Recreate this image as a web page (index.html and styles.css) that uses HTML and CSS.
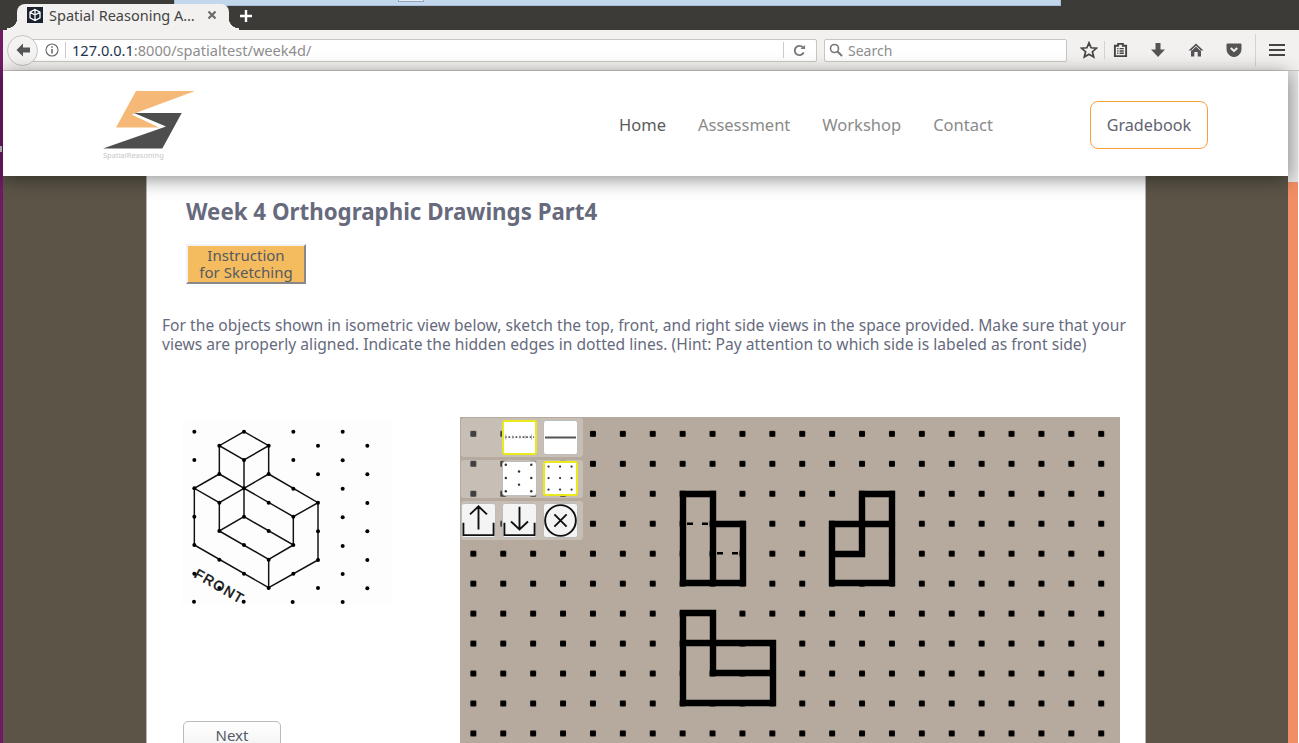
FILE: index.html
```html
<!DOCTYPE html>
<html lang="en">
<head>
<meta charset="utf-8">
<title>Spatial Reasoning Assessment</title>
<link rel="stylesheet" href="styles.css">
</head>
<body>
<div class="bluewin"><span class="bluebox"></span></div>
<div class="tabbar">
  <div class="tab">
    <svg class="favicon" viewBox="0 0 16 16"><rect width="16" height="16" fill="#1b2230"/><path d="M8 2.500 13 5.200V10.800L8 13.500 3 10.800V5.200ZM8 2.500V7M3 5.200 8 8 13 5.200M8 8V13.500" fill="none" stroke="#fff" stroke-width="1.300"/></svg>
    <span class="tabtitle">Spatial Reasoning A…</span>
    <svg class="tabclose" viewBox="0 0 10 10"><path d="M1.500 1.500 8.500 8.500M8.500 1.500 1.500 8.500" stroke="#6a6a66" stroke-width="2.200"/></svg>
  </div>
  <svg class="newtab" viewBox="0 0 14 14"><path d="M7 1V13M1 7H13" stroke="#fff" stroke-width="2.400"/></svg>
</div>
<div class="below">
  <div class="strip"></div>
  <div class="window">
    <div class="toolbar">
      <div class="backbtn"><svg viewBox="0 0 16 16" width="16" height="16"><path d="M8 1.500 1.500 8 8 14.500V10.500H15V5.500H8Z" fill="#555"/></svg></div>
      <div class="urlbar">
        <svg class="info" viewBox="0 0 14 14"><circle cx="7" cy="7" r="6" fill="none" stroke="#666" stroke-width="1.100"/><path d="M7 6V10.500M7 3.300V4.800" stroke="#666" stroke-width="1.500"/></svg>
        <span class="urlsep"></span>
        <span class="url"><b>127.0.0.1</b>:8000/spatialtest/week4d/</span>
        <span class="urlsep2"></span>
        <svg class="reload" viewBox="0 0 14 14"><path d="M11.500 9A5 5 0 1 1 10.500 3.500" fill="none" stroke="#777" stroke-width="2"/><path d="M8 5.500H13V1Z" fill="#777"/></svg>
      </div>
      <div class="searchbar">
        <svg class="mag" viewBox="0 0 14 14"><circle cx="5.500" cy="5.500" r="4" fill="none" stroke="#777" stroke-width="1.600"/><path d="M8.500 8.500 13 13" stroke="#777" stroke-width="2"/></svg>
        <span>Search</span>
      </div>
      <div class="tbicons">
        <svg class="tbi star" viewBox="0 0 18 18"><path d="M9 1.800 11.100 6.800 16.500 7.200 12.400 10.700 13.700 16 9 13.200 4.300 16 5.600 10.700 1.500 7.200 6.900 6.800Z" fill="none" stroke="#444" stroke-width="1.700"/></svg>
        <span class="tbsep"></span>
        <svg class="tbi clip" viewBox="0 0 16 16"><path d="M2 3.500H5.500V1.500H10.500V3.500H14V14.500H2Z" fill="none" stroke="#444" stroke-width="2"/><path d="M4.500 6.500H5.800M7 6.500H11.500M4.500 9H5.800M7 9H11.500M4.500 11.500H5.800M7 11.500H11.500" stroke="#444" stroke-width="1.500"/></svg>
        <svg class="tbi down" viewBox="0 0 16 16"><path d="M5.500 1H10.500V7.500H15L8 15 1 7.500H5.500Z" fill="#555"/></svg>
        <svg class="tbi home" viewBox="0 0 16 16"><path d="M8 1.500 15.500 8.500H13V14.500H9.700V10H6.300V14.500H3V8.500H.5Z" fill="#555"/><path d="M8 4.200 3.500 8.500" stroke="#f2f1ef" stroke-width=".9"/><path d="M8 4.200 12.500 8.500" stroke="#f2f1ef" stroke-width=".9"/></svg>
        <svg class="tbi pocket" viewBox="0 0 16 16"><path d="M1 2H15V7.500A7 7 0 0 1 1 7.500Z" fill="#555" stroke="#555" stroke-linejoin="round"/><path d="M4.800 6 8 9 11.200 6" fill="none" stroke="#f2f1ef" stroke-width="2"/></svg>
        <span class="tbsep tbsep2"></span>
        <svg class="tbi burger" viewBox="0 0 16 14"><path d="M0 2H16M0 7H16M0 12H16" stroke="#444" stroke-width="2.100"/></svg>
      </div>
    </div>
    <div class="viewport">
      <div class="page">
        <header class="siteheader">
          <div class="logo">
            <svg class="logomark" viewBox="0 0 92 60"><polygon points="33,0 92,0 28.700,23.500 56,36.500 13,36.500" fill="#f5b877"/><polygon points="31,22 78.700,22 59.300,57.500 0,57.500 63,35.500" fill="#4e4e4e"/></svg>
            <span class="logotext">SpatialReasoning</span>
          </div>
          <nav class="nav">
            <a class="navlink active">Home</a>
            <a class="navlink">Assessment</a>
            <a class="navlink">Workshop</a>
            <a class="navlink">Contact</a>
          </nav>
          <a class="gradebook">Gradebook</a>
        </header>
        <main class="main">
          <section class="content">
            <h1 class="title">Week 4 Orthographic Drawings Part4</h1>
            <a class="instr">Instruction<br>for Sketching</a>
            <p class="desc">For the objects shown in isometric view below, sketch the top, front, and right side views in the space provided. Make sure that your views are properly aligned. Indicate the hidden edges in dotted lines. (Hint: Pay attention to which side is labeled as front side)</p>
            <div class="work">
              <div class="leftcol">
                <svg class="iso" viewBox="36 30 630 555">
                  <rect x="36" y="30" width="630" height="555" fill="#fdfdfd"/>
                  <g fill="none" stroke="#111" stroke-width="4.400">
                    <path d="M222 65 296 107 222 150 148 107Z"/>
                    <path d="M148 107V192M296 107V192M222 150V320"/>
                    <path d="M148 192 73 235 148 278 296 192"/>
                    <path d="M148 192 370 320 444 278 296 192"/>
                    <path d="M73 235V405L296 533 444 450V278"/>
                    <path d="M148 278V363L222 320 370 405V320"/>
                    <path d="M148 363 296 448 370 405M296 448V533"/>
                  </g>
                  <g fill="#000">
                    <circle cx="73" cy="65" r="6"/><circle cx="222" cy="65" r="6"/><circle cx="370" cy="65" r="6"/><circle cx="518" cy="65" r="6"/>
                    <circle cx="148" cy="107" r="6"/><circle cx="296" cy="107" r="6"/><circle cx="444" cy="107" r="6"/><circle cx="592" cy="107" r="6"/>
                    <circle cx="73" cy="150" r="6"/><circle cx="222" cy="150" r="6"/><circle cx="370" cy="150" r="6"/><circle cx="518" cy="151" r="6"/>
                    <circle cx="148" cy="192" r="6"/><circle cx="296" cy="192" r="6"/><circle cx="444" cy="193" r="6"/><circle cx="592" cy="193" r="6"/>
                    <circle cx="73" cy="235" r="6"/><circle cx="222" cy="235" r="6"/><circle cx="370" cy="236" r="6"/><circle cx="518" cy="236" r="6"/>
                    <circle cx="148" cy="278" r="6"/><circle cx="296" cy="278" r="6"/><circle cx="444" cy="278" r="6"/><circle cx="592" cy="279" r="6"/>
                    <circle cx="73" cy="320" r="6"/><circle cx="222" cy="320" r="6"/><circle cx="370" cy="320" r="6"/><circle cx="518" cy="322" r="6"/>
                    <circle cx="148" cy="363" r="6"/><circle cx="296" cy="363" r="6"/><circle cx="444" cy="364" r="6"/><circle cx="592" cy="364" r="6"/>
                    <circle cx="73" cy="405" r="6"/><circle cx="222" cy="405" r="6"/><circle cx="370" cy="405" r="6"/><circle cx="518" cy="408" r="6"/>
                    <circle cx="148" cy="449" r="6"/><circle cx="296" cy="449" r="6"/><circle cx="444" cy="450" r="6"/><circle cx="592" cy="450" r="6"/>
                    <circle cx="73" cy="491" r="6"/><circle cx="222" cy="491" r="6"/><circle cx="370" cy="491" r="6"/><circle cx="518" cy="492" r="6"/>
                    <circle cx="148" cy="534" r="6"/><circle cx="296" cy="534" r="6"/><circle cx="444" cy="534" r="6"/><circle cx="592" cy="535" r="6"/>
                    <circle cx="72" cy="575" r="6"/><circle cx="221" cy="575" r="6"/><circle cx="368" cy="576" r="6"/><circle cx="518" cy="576" r="6"/>
                  </g>
                  <text class="front" transform="translate(70 500) rotate(30)">FRONT</text>
                </svg>
                <a class="next">Next</a>
              </div>
              <div class="sketch">
                <svg class="sheet" viewBox="0 0 660 400">
                  <defs><pattern id="dots" x="10.350" y="13.850" width="29.900" height="29.960" patternUnits="userSpaceOnUse"><rect width="6" height="6" rx="1" fill="#000"/></pattern></defs>
                  <rect width="660" height="400" fill="#b5aa9d"/>
                  <rect width="660" height="400" fill="url(#dots)"/>
                  <g fill="none" stroke="#000" stroke-width="6.400" stroke-linecap="square">
                    <path d="M223 77H253V166H223ZM253 107H283V166H253Z"/>
                    <path d="M402 77H432V166H372V107H432M402 77V137H372"/>
                    <path d="M223 196H253V256H313M223 196V286H313V226H223"/>
                  </g>
                  <path d="M227 106.700H233M242 106.700H248M257 136.300H263M272 136.300H278" stroke="#000" stroke-width="2.600"/>
                </svg>
                <div class="tools">
                  <div class="toolrow">
                    <a class="tool on"><svg viewBox="0 0 35 35"><path d="M1 17H34" stroke="#555" stroke-width="2" stroke-dasharray="2 2"/><path d="M2 14V20M31 14V20M10 15V19M18 15V19M24 15V19" stroke="#aaa" stroke-width="1"/></svg></a>
                    <a class="tool"><svg viewBox="0 0 35 35"><path d="M1 17.500H34" stroke="#555" stroke-width="2"/></svg></a>
                  </div>
                  <div class="toolrow">
                    <a class="tool"><svg viewBox="0 0 35 35"><g fill="#333"><circle cx="3" cy="3" r="1.300"/><circle cx="30" cy="3" r="1.300"/><circle cx="17" cy="10" r="1.300"/><circle cx="3" cy="17" r="1.300"/><circle cx="30" cy="17" r="1.300"/><circle cx="17" cy="24" r="1.300"/><circle cx="3" cy="31" r="1.300"/><circle cx="30" cy="31" r="1.300"/></g></svg></a>
                    <a class="tool on"><svg viewBox="0 0 35 35"><g fill="#333"><circle cx="4" cy="4" r="1.300"/><circle cx="17" cy="4" r="1.300"/><circle cx="30" cy="4" r="1.300"/><circle cx="4" cy="17" r="1.300"/><circle cx="17" cy="17" r="1.300"/><circle cx="30" cy="17" r="1.300"/><circle cx="4" cy="30" r="1.300"/><circle cx="17" cy="30" r="1.300"/><circle cx="30" cy="30" r="1.300"/></g></svg></a>
                  </div>
                  <div class="toolrow">
                    <a class="tool grey"><svg viewBox="0 0 35 35"><path d="M17.500 27V2.500M8.500 11 17.500 2.500 26.500 11" fill="none" stroke="#111" stroke-width="2"/><path d="M1.500 20V33H33.500V20" fill="none" stroke="#111" stroke-width="2"/></svg></a>
                    <a class="tool grey"><svg viewBox="0 0 35 35"><path d="M17.500 3V27M8.500 18.500 17.500 27 26.500 18.500" fill="none" stroke="#111" stroke-width="2"/><path d="M1.500 20V33H33.500V20" fill="none" stroke="#111" stroke-width="2"/></svg></a>
                    <a class="tool grey"><svg viewBox="0 0 35 35"><circle cx="17.500" cy="17.500" r="16.300" fill="none" stroke="#111" stroke-width="2"/><path d="M11 11 24 24M24 11 11 24" stroke="#111" stroke-width="2"/></svg></a>
                  </div>
                </div>
              </div>
            </div>
          </section>
        </main>
      </div>
      <div class="scrollbar"><div class="thumb"></div></div>
    </div>
  </div>
</div>
<div class="speck"></div>
</body>
</html>
```

FILE: styles.css
```css
* { box-sizing: border-box; }
html, body { margin: 0; height: 743px; overflow: hidden; }
body { position: relative; background: #3c3b37; font-family: "Noto Sans", sans-serif; }
a { display: block; }

.bluewin { position: absolute; left: 174px; top: 0; width: 887px; height: 6px; background: #c3d7ec; border: 1px solid #a9bfd8; border-top: 0; z-index: 1; }
.bluebox { position: absolute; left: 223px; top: 0; width: 26px; height: 2px; background: #e8edf2; border: 1px solid #8fa3ba; border-top: 0; }
.tabbar { height: 30px; background: #3c3b37; display: flex; align-items: flex-end; padding-left: 17px; }
.tab { position: relative; z-index: 2; width: 212px; height: 26px; background: #f2f1ef; border-radius: 8px 8px 0 0; display: flex; align-items: center; padding: 0 0 4px 10px; }
.tab::before, .tab::after { content: ""; position: absolute; bottom: 0; width: 10px; height: 12px; }
.tab::before { left: -10px; background: radial-gradient(circle at 0 0, transparent 10px, #f2f1ef 10.500px); }
.tab::after { right: -10px; background: radial-gradient(circle at 100% 0, transparent 10px, #f2f1ef 10.500px); }
.favicon { width: 16px; height: 16px; flex: none; }
.tabtitle { margin-left: 6px; font-size: 14.500px; color: #444; width: 152px; white-space: nowrap; overflow: hidden; }
.tabclose { width: 10px; height: 10px; margin-left: 6px; }
.newtab { width: 14px; height: 14px; margin: 0 0 7px 10px; }

.below { display: flex; height: 713px; }
.strip { width: 3px; background: #701a66; flex: none; }
.window { flex: 1; min-width: 0; display: flex; flex-direction: column; }

.toolbar { height: 41px; background: #f2f1ef; border-bottom: 1px solid #cdc9c5; display: flex; align-items: center; padding-left: 4px; position: relative; }
.backbtn { width: 31px; height: 31px; flex: none; border-radius: 50%; background: #f4f3f1; border: 1px solid #c6c3bf; display: flex; align-items: center; justify-content: center; position: relative; z-index: 1; }
.urlbar { width: 787px; height: 23px; margin-left: -8px; background: #fff; border: 1px solid #c9c5c1; border-radius: 0 2px 2px 0; display: flex; align-items: center; padding-left: 14px; flex: none; }
.info { width: 14px; height: 14px; flex: none; }
.urlsep { width: 1px; height: 16px; background: #ccc; margin: 0 6px 0 6px; flex: none; }
.url { font-size: 14.600px; color: #8e8e8e; width: 711px; white-space: nowrap; }
.url b { font-weight: 400; color: #23334a; }
.urlsep2 { width: 1px; height: 16px; background: #ccc; flex: none; }
.reload { width: 13px; height: 13px; margin-left: 9px; flex: none; }
.searchbar { width: 243px; height: 23px; margin-left: 7px; background: #fff; border: 1px solid #c9c5c1; border-radius: 2px; display: flex; align-items: center; padding-left: 4px; font-size: 14px; color: #8e8e8e; flex: none; }
.mag { width: 14px; height: 14px; margin-right: 5px; }
.tbicons { display: flex; align-items: center; margin-left: 13px; height: 100%; }
.tbi { flex: none; }
.star { width: 18px; height: 18px; }
.tbsep { width: 1px; height: 18px; background: #d6d3cf; margin: 0 8px 0 6px; }
.clip { width: 15px; height: 16px; }
.down { width: 16px; height: 16px; margin-left: 22px; }
.home { width: 16px; height: 16px; margin-left: 22px; }
.pocket { width: 16px; height: 16px; margin-left: 22px; }
.tbsep2 { height: 32px; margin: 0 13px 0 13px; }
.burger { width: 16px; height: 14px; }

.viewport { flex: 1; min-height: 0; display: flex; background: #fff; }
.page { width: 1285px; flex: none; display: flex; flex-direction: column; }
.siteheader { height: 105px; background: #fff; box-shadow: 0 3px 18px rgba(0, 0, 0, .45); position: relative; z-index: 1; display: flex; align-items: center; padding: 2px 0 0 100px; flex: none; }
.logo { width: 92px; display: flex; flex-direction: column; align-self: flex-start; margin-top: 18px; }
.logomark { width: 92px; height: 60px; display: block; }
.logotext { font-size: 7.500px; color: #c6c6c6; white-space: nowrap; margin-top: -1px; }
.nav { display: flex; gap: 32px; margin-left: 424px; }
.navlink { font-size: 16.500px; color: #8a8a8a; }
.navlink.active { color: #5a5a5a; }
.gradebook { margin-left: 97px; width: 118px; height: 48px; border: 1px solid #f7a13e; border-radius: 8px; display: flex; align-items: center; justify-content: center; font-size: 16.200px; color: #5f636f; }

.main { flex: 1; min-height: 0; background: #5b5447; padding-left: 143px; overflow: hidden; }
.content { width: 1000px; height: 100%; background: #fff; border-left: 1px solid #b5b5b5; border-right: 1px solid #b5b5b5; padding: 21px 0 0 0; }
.title { margin: 0 0 0 39px; font-size: 22.300px; line-height: 30px; font-weight: 700; color: #676a7d; }
.instr { margin: 17px 0 0 39px; width: 120px; height: 40px; background: #f4bc5e; border: 2px solid; border-color: #f2f2f2 #888 #888 #f2f2f2; text-align: center; font-size: 15px; line-height: 17px; color: #555a60; padding-top: 1px; }
.desc { margin: 32px 0 0 15px; width: 975px; font-size: 15.600px; letter-spacing: .02px; line-height: 19px; color: #666a7d; }
.work { display: grid; grid-template-columns: 313px 660px; margin-top: 63px; }
.leftcol { padding: 3px 0 0 35px; }
.iso { width: 210px; height: 185px; display: block; }
.front { font-family: "Liberation Sans", sans-serif; font-size: 42px; fill: #111; stroke: #111; stroke-width: 1.500px; letter-spacing: 4px; }
.next { margin: 116px 0 0 1px; width: 98px; height: 40px; border: 1px solid #bbb; border-radius: 5px; background: linear-gradient(#fff, #eee); text-align: center; font-size: 15px; line-height: 26px; color: #555a6a; }
.sketch { position: relative; width: 660px; height: 400px; }
.sheet { width: 660px; height: 400px; display: block; }
.tools { position: absolute; left: 1px; top: 1px; width: 122px; display: flex; flex-direction: column; gap: 3px; }
.toolrow { height: 38.500px; background: rgba(255, 255, 255, .25); border-radius: 3px; display: flex; gap: 6px; justify-content: flex-end; align-items: center; padding-right: 5px; }
.tool { width: 35px; height: 35px; background: #fff; border: 1px solid #bdbdbd; border-radius: 3px; overflow: hidden; }
.tool.on { border: 2px solid #e9e91c; }
.tool.grey { background: #f4f4f4; }
.tool svg { width: 100%; height: 100%; display: block; }

.scrollbar { width: 10px; background: #e6e6e6; flex: none; padding-top: 111px; }
.thumb { height: 100%; background: #f28e65; }
.speck { position: absolute; left: 0; top: 146px; width: 2px; height: 6px; background: #ccc; }
```
